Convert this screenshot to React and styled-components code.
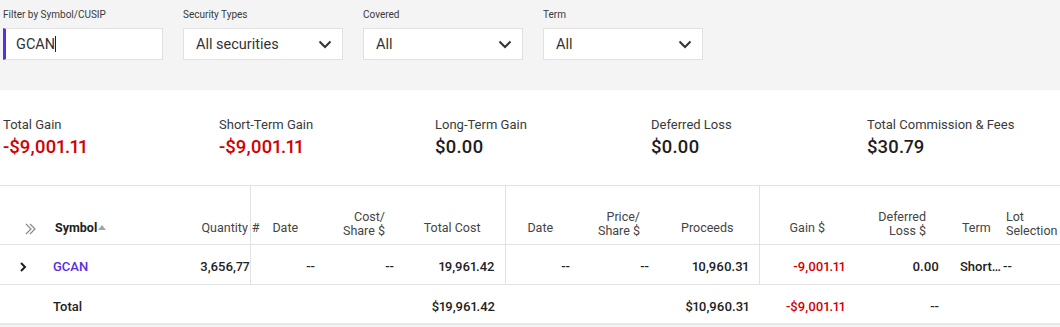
import React from "react";
import styled, { createGlobalStyle } from "styled-components";

const GlobalStyle = createGlobalStyle`
  body {
    margin: 0;
    background: #f4f4f4;
    font-family: Roboto, "Noto Sans", sans-serif;
    color: #333;
  }
`;

const Page = styled.div`
  width: 1060px;
  overflow: hidden;
`;

const FilterBar = styled.div`
  display: flex;
  gap: 20px;
  height: 90px;
  box-sizing: border-box;
  padding: 9px 0 0 3px;
  background: #f4f4f4;
`;

const Field = styled.div`
  display: flex;
  flex-direction: column;
  gap: 7px;
  width: 160px;
`;

const Label = styled.span`
  font-size: 10px;
  line-height: 12px;
  color: #3a3a3a;
`;

const Box = styled.div`
  display: flex;
  align-items: center;
  justify-content: space-between;
  height: 32px;
  box-sizing: border-box;
  background: #fff;
  border: 1px solid #e1e1e1;
  border-left: ${(p) => (p.active ? "3px solid #5a2ee3" : "1px solid #e1e1e1")};
  padding: ${(p) => (p.active ? "0 10px 0 10px" : "0 10px 0 12px")};
  font-size: 14.5px;
  color: #333;
`;

const Caret = styled.span`
  display: inline-block;
  width: 1px;
  height: 16px;
  background: #222;
  vertical-align: -3px;
`;

const Summary = styled.div`
  display: flex;
  background: #fff;
  height: 95px;
  box-sizing: border-box;
  padding: 27px 0 0 3px;
`;

const Stat = styled.div`
  display: flex;
  flex-direction: column;
  gap: 3px;
  width: 216px;
  flex-shrink: 0;
`;

const StatLabel = styled.span`
  font-size: 13px;
  line-height: 16px;
  color: #3a3a3a;
`;

const StatValue = styled.span`
  font-size: 18.5px;
  line-height: 22px;
  font-weight: 500;
  font-variant-numeric: proportional-nums;
  color: ${(p) => (p.neg ? "#d10000" : "#1e1e1e")};
`;

const Table = styled.table`
  width: 1060px;
  table-layout: fixed;
  border-collapse: collapse;
  background: #fff;
  border-top: 1px solid #e2e2e2;
`;

const HeadCell = styled.th`
  height: 59px;
  box-sizing: border-box;
  vertical-align: bottom;
  padding: 0 ${(p) => p.padR ?? 0}px ${(p) => (p.lines > 1 ? 6 : 9)}px ${(p) => p.padL ?? 0}px;
  text-align: ${(p) => p.align || "right"};
  font-size: 12.5px;
  line-height: 14px;
  font-weight: ${(p) => (p.bold ? 700 : 400)};
  color: ${(p) => (p.bold ? "#222" : "#444")};
  border-left: ${(p) => (p.divider ? "1px solid #e2e2e2" : "none")};
  white-space: nowrap;
  overflow: visible;
`;

const BodyRow = styled.tr`
  height: ${(p) => (p.total ? 39 : 40)}px;
  border-top: 1px solid #e2e2e2;
  border-bottom: ${(p) => (p.total ? "2px solid #e6e6e6" : "none")};
`;

const Cell = styled.td`
  padding: ${(p) => (p.total ? 6 : 4)}px ${(p) => p.padR ?? 0}px 0 ${(p) => p.padL ?? 0}px;
  text-align: ${(p) => p.align || "right"};
  font-size: 13px;
  font-weight: 500;
  font-variant-numeric: proportional-nums;
  color: ${(p) => (p.neg ? "#d10000" : p.link ? "#5a2ee3" : "#222")};
  border-left: ${(p) => (p.divider ? "1px solid #e2e2e2" : "none")};
  white-space: nowrap;
  overflow: hidden;
  text-overflow: ${(p) => (p.ellipsis ? "ellipsis" : "clip")};
`;

const SortMark = styled.span`
  display: inline-block;
  width: 0;
  height: 0;
  margin-left: 1px;
  border-left: 4px solid transparent;
  border-right: 4px solid transparent;
  border-bottom: 5px solid #a5a5a5;
  vertical-align: 2px;
`;

const Hash = styled.span`
  margin-right: -10px;
  margin-left: 4px;
`;

const Chevron = () => (
  <svg width="12" height="12" viewBox="0 0 12 12" style={{ display: "block" }}>
    <polyline points="4,2 8,6 4,10" fill="none" stroke="#1e1e1e" strokeWidth="2" />
  </svg>
);

const DoubleChevron = () => (
  <svg width="12" height="12" viewBox="0 0 12 12" style={{ display: "block" }}>
    <polyline points="1,1 6,6 1,11" fill="none" stroke="#8a8a8a" strokeWidth="1.2" />
    <polyline points="5,1 10,6 5,11" fill="none" stroke="#8a8a8a" strokeWidth="1.2" />
  </svg>
);

const DownArrow = () => (
  <svg width="14" height="9" viewBox="0 0 14 9">
    <polyline points="1.5,1.5 7,7 12.5,1.5" fill="none" stroke="#333" strokeWidth="2" />
  </svg>
);

const IconWrap = styled.div`
  display: flex;
  padding-left: ${(p) => p.pad}px;
`;

const columns = [
  { key: "expand", width: 45 },
  { key: "symbol", width: 115, label: "Symbol", align: "left", padL: 10, cellPadL: 8, bold: true },
  { key: "qty", width: 90, label: "Quantity", padR: 0, cellPadR: 0 },
  { key: "openDate", width: 70, label: "Date", align: "center", divider: true, cellPadR: 5 },
  { key: "costShare", width: 80, label: ["Cost/", "Share $"], padR: 15, cellPadR: 6 },
  { key: "totalCost", width: 105, label: "Total Cost", padR: 24, cellPadR: 10 },
  { key: "closeDate", width: 70, label: "Date", align: "center", divider: true, cellPadR: 5 },
  { key: "priceShare", width: 80, label: ["Price/", "Share $"], padR: 15, cellPadR: 6 },
  { key: "proceeds", width: 104, label: "Proceeds", padR: 25, cellPadR: 10 },
  { key: "gain", width: 91, label: "Gain $", divider: true, padR: 25, cellPadR: 5 },
  { key: "deferred", width: 95, label: ["Deferred", "Loss $"], padR: 19, cellPadR: 6 },
  { key: "term", width: 57, label: "Term", align: "left", padL: 17, cellPadL: 15, cellPadR: 0 },
  { key: "lot", width: 58, label: ["Lot", "Selection"], align: "left", padL: 4, cellPadL: 1 },
];

const row = {
  symbol: "GCAN",
  qty: "3,656,77",
  openDate: "--",
  costShare: "--",
  totalCost: "19,961.42",
  closeDate: "--",
  priceShare: "--",
  proceeds: "10,960.31",
  gain: "-9,001.11",
  deferred: "0.00",
  term: "Short-Term",
  lot: "--",
};

const totals = {
  symbol: "Total",
  totalCost: "$19,961.42",
  proceeds: "$10,960.31",
  gain: "-$9,001.11",
  deferred: "--",
};

const stats = [
  { label: "Total Gain", value: "-$9,001.11", neg: true },
  { label: "Short-Term Gain", value: "-$9,001.11", neg: true },
  { label: "Long-Term Gain", value: "$0.00" },
  { label: "Deferred Loss", value: "$0.00" },
  { label: "Total Commission & Fees", value: "$30.79" },
];

const selects = [
  { label: "Security Types", value: "All securities" },
  { label: "Covered", value: "All" },
  { label: "Term", value: "All" },
];

function headerContent(col) {
  if (col.key === "expand")
    return (
      <IconWrap pad={25}>
        <DoubleChevron />
      </IconWrap>
    );
  if (col.key === "symbol")
    return (
      <>
        Symbol
        <SortMark />
      </>
    );
  if (col.key === "qty")
    return (
      <>
        Quantity<Hash>#</Hash>
      </>
    );
  if (Array.isArray(col.label))
    return col.label.map((l, i) => (
      <React.Fragment key={i}>
        {i > 0 && <br />}
        {l}
      </React.Fragment>
    ));
  return col.label;
}

export default function App() {
  return (
    <Page>
      <GlobalStyle />
      <FilterBar>
        <Field>
          <Label>Filter by Symbol/CUSIP</Label>
          <Box active>
            <span>
              GCAN
              <Caret />
            </span>
          </Box>
        </Field>
        {selects.map((s) => (
          <Field key={s.label}>
            <Label>{s.label}</Label>
            <Box>
              <span>{s.value}</span>
              <DownArrow />
            </Box>
          </Field>
        ))}
      </FilterBar>

      <Summary>
        {stats.map((s) => (
          <Stat key={s.label}>
            <StatLabel>{s.label}</StatLabel>
            <StatValue neg={s.neg}>{s.value}</StatValue>
          </Stat>
        ))}
      </Summary>

      <Table>
        <colgroup>
          {columns.map((c) => (
            <col key={c.key} style={{ width: c.width }} />
          ))}
        </colgroup>
        <thead>
          <tr>
            {columns.map((c) => (
              <HeadCell
                key={c.key}
                align={c.align}
                padL={c.padL}
                padR={c.padR}
                bold={c.bold}
                divider={c.divider}
                lines={Array.isArray(c.label) ? c.label.length : 1}
              >
                {headerContent(c)}
              </HeadCell>
            ))}
          </tr>
        </thead>
        <tbody>
          <BodyRow>
            {columns.map((c) =>
              c.key === "expand" ? (
                <Cell key={c.key} align="left">
                  <IconWrap pad={17}>
                    <Chevron />
                  </IconWrap>
                </Cell>
              ) : (
                <Cell
                  key={c.key}
                  align={c.align === "center" ? "right" : c.align}
                  padL={c.cellPadL}
                  padR={c.cellPadR}
                  divider={c.divider}
                  link={c.key === "symbol"}
                  neg={c.key === "gain"}
                  ellipsis={c.key === "term"}
                >
                  {row[c.key]}
                </Cell>
              )
            )}
          </BodyRow>
          <BodyRow total>
            {columns.map((c) => (
              <Cell
                key={c.key}
                total
                align={c.align === "center" ? "right" : c.align}
                padL={c.cellPadL}
                padR={c.cellPadR}
                neg={c.key === "gain"}
              >
                {totals[c.key] || ""}
              </Cell>
            ))}
          </BodyRow>
        </tbody>
      </Table>
    </Page>
  );
}
